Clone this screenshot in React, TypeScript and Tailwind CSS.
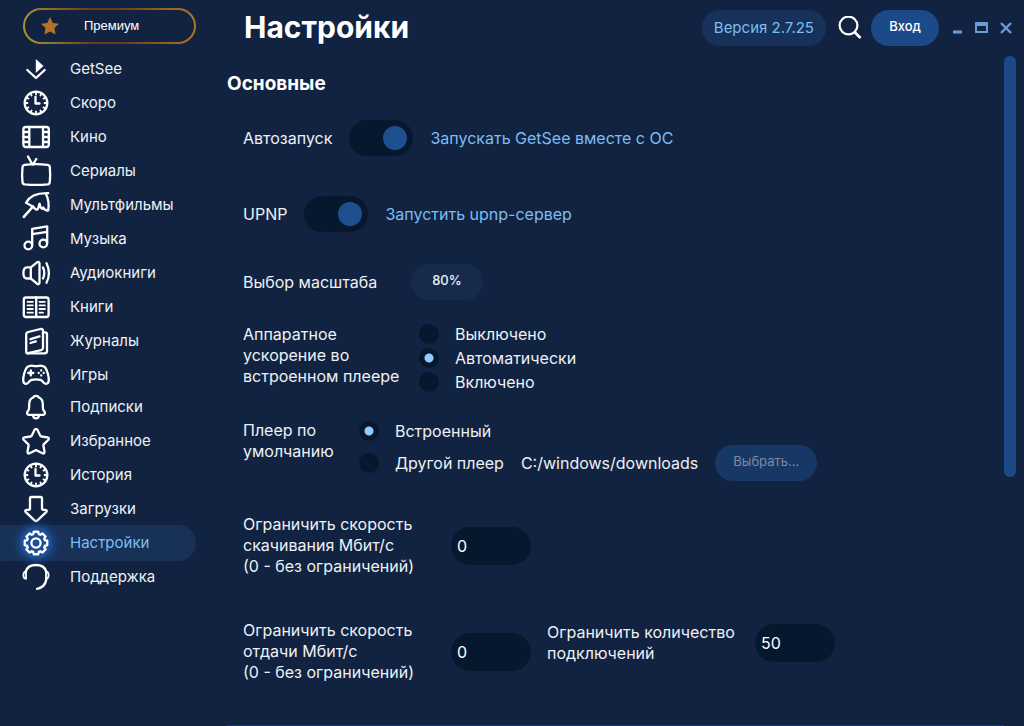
import { ReactNode, useState } from 'react';

const gearPath = (() => {
  const points: string[] = [];
  for (let i = 0; i < 8; i++) {
    const a = (i * Math.PI) / 4 - Math.PI / 2;
    const steps: [number, number][] = [
      [-0.3, 9.3],
      [-0.2, 11.5],
      [0.2, 11.5],
      [0.3, 9.3],
    ];
    steps.forEach(([d, r]) => {
      points.push(`${(16 + r * Math.cos(a + d)).toFixed(2)} ${(16 + r * Math.sin(a + d)).toFixed(2)}`);
    });
  }
  return `M${points.join('L')}Z`;
})();

const icons: Record<string, ReactNode> = {
  getsee: (
    <>
      <path d="M7.3 17l8.700 8 8.700-8" />
      <path d="M15.8 6v14l7.700-7z" fill="currentColor" stroke="none" />
    </>
  ),
  clock: (
    <>
      <circle cx="16" cy="16" r="11.3" />
      <path d="M15.5 10V16.5H19.5" />
      <path
        strokeWidth="1.8"
        d="M16 5v2.500M16 24.500v2.500M5 16h2.500M24.500 16H27M6.500 10.500l2 1.100M23.500 20.400l2 1.100M6.500 21.500l2-1.100M23.500 11.600l2-1.100M10.500 6.500l1.100 2M20.400 23.500l1.100 2M10.500 25.500l1.100-2M20.400 8.500l1.100-2"
      />
    </>
  ),
  film: (
    <>
      <rect x="3.400" y="6" width="25.400" height="20" rx="2.500" />
      <path d="M9.300 6v20M23 6v20M3.400 11h6M3.400 16h6M3.400 21h6M23 11h6M23 16h6M23 21h6" />
    </>
  ),
  tv: (
    <>
      <path d="M4.500 9.800C12 8.800 20 8.800 27.500 9.800c1.400.2 2.200 1 2.300 2.300.5 5 .5 10 0 15-.1 1.300-.9 2-2.300 2.200-7.500.7-15 .7-22.800 0-1.400-.2-2.100-.9-2.200-2.200-.5-5-.5-10 0-15 .1-1.300.8-2.100 2-2.300z" />
      <path d="M8 1.500l4.300 7.800M16.300 4l-3.300 5.300" />
    </>
  ),
  umbrella: (
    <>
      <path d="M3.800 27.800L13 17.500" strokeWidth="2.600" />
      <path d="M6 13.800C9.500 7.200 17 3.800 28.300 4.200M25.800 4.500C28 9 29.300 15.500 28.200 21.500c-1.800.4-3.800-.8-5-3M6 13.800c3 1.700 5.500 2.400 7.600 4.600 1.400 1.200 2.200 2.500 3.400 2.300 1.700-.3 1.200-3 2.600-6 .8 3.500 1.500 5 2.900 5.200" />
    </>
  ),
  music: (
    <>
      <circle cx="8.300" cy="22.500" r="3.800" />
      <circle cx="23.300" cy="20.500" r="3.800" />
      <path d="M12.200 22.300V5.800L27.200 3.300V20.300M12.200 11.200l15-2.400" />
    </>
  ),
  speaker: (
    <>
      <path d="M10.800 10.300H7C4 10.300 3.400 12.500 3.400 16S4 21.500 7 21.500h3.800z" />
      <path d="M10.800 10.300L17 5.300c1.300-.9 2.500-.3 2.500 1.200v19c0 1.500-1.200 2-2.500 1.200l-6.200-5.200M23 10.500c1.600 3.500 1.600 7.500 0 11M26.500 6.200c3 6 3 13.500 0 19.500" />
    </>
  ),
  book: (
    <>
      <rect x="3.800" y="6.500" width="24.800" height="19.500" rx="2.200" />
      <path d="M16.200 6.500v19" />
      <path
        strokeWidth="1.800"
        d="M7.500 10.800h5.400M7.500 14.400h5.400M7.500 18h5.400M7.500 21.700h5.400M19.500 10.800h5.400M19.500 14.400h5.400M19.500 18h5.400M19.500 21.700h3.500"
      />
    </>
  ),
  magazine: (
    <>
      <path d="M6.200 9.500c0-1.300.8-2.200 2-2.500l12.300-3c1.600-.3 2.500.3 2.500 1.800v17c0 1.200-.6 2-1.800 2.300L7 28.300c-.6 0-.8-.3-.8-1z" />
      <path d="M23 7.300h2c1.400 0 2 .8 2 2V26c0 1.500-.8 2.300-2.300 2.300H7.300M10.500 14.200l9-2.800M10.500 18l5.300-1.600" />
    </>
  ),
  gamepad: (
    <>
      <path d="M10.500 6.800c1.800-.6 2.500.4 5.500.4s3.700-1 5.500-.4c1 .4 2.300.2 3.500 1.500 2.200 2.800 4 9.200 3.800 13.200-.1 2.300-1.300 3.300-3 3.300-2.500 0-3-3.300-5.300-4-2.300-.5-6.700-.5-9 0-2.300.7-2.800 4-5.300 4-1.700 0-2.900-1-3-3.300-.2-4 1.600-10.400 3.800-13.200 1.200-1.300 2.500-1.100 3.500-1.500z" />
      <path d="M10.800 11.500v5M8.300 14h5" />
      <path d="M21.200 11.500h.01M21.200 16.500h.01M18.700 14h.01M23.700 14h.01" />
    </>
  ),
  bell: (
    <>
      <path d="M13.300 6.500C13.600 4.200 18.400 4.200 18.700 6.500c3 1 4.100 3.500 4.100 6.500 0 4-.2 6 1.500 7.300.9.700.9 3.500-.8 3.500h-15c-1.700 0-1.700-2.800-.8-3.500 1.700-1.300 1.500-3.300 1.500-7.300 0-3 1.100-5.500 4.100-6.500z" />
      <path d="M13 24.200c.3 4.200 5.700 4.200 6 0" />
    </>
  ),
  star: (
    <path d="M16 3.800c.6 0 1.100.4 1.400 1l2.900 6c.2.400.5.600.9.700l6.400.9c1.300.2 1.600 1.500.8 2.300l-4.700 4.700c-.3.300-.4.700-.3 1.100l1.100 6.300c.2 1.400-.9 2-2 1.500l-5.700-2.900c-.5-.2-1.100-.2-1.600 0l-5.700 2.900c-1.100.5-2.200-.1-2-1.500l1.100-6.300c.1-.4 0-.8-.3-1.100l-4.700-4.700c-.8-.8-.5-2.100.8-2.300l6.400-.9c.4-.1.700-.3.9-.7l2.900-6c.3-.6.8-1 1.400-1z" />
  ),
  download: (
    <path d="M11.500 4h9c1 0 1.500.5 1.500 1.500v10.300c0 .7.3 1 1 1h2c1.700 0 2.200 1.200 1.200 2.300l-8.700 8.300c-1 .9-2 .9-3 0l-8.700-8.300c-1-1.100-.5-2.300 1.200-2.300h2c.7 0 1-.3 1-1V5.500C10 4.500 10.500 4 11.500 4z" />
  ),
  settings: (
    <>
      <path d={gearPath} />
      <circle cx="16" cy="16" r="4.600" />
    </>
  ),
  support: (
    <>
      <path d="M5.800 10.500C7 6 11 4 16 4s9 2 10.200 6.500M26.300 18.500C25.500 23.500 22.500 26.700 17 27.800" />
      <path
        strokeWidth="1.800"
        d="M6 10.500c-1.800.3-2.600 1.800-2.600 3.700s.8 3.400 2.600 3.700zM26 10.500c1.800.3 2.600 1.800 2.600 3.700s-.8 3.400-2.600 3.700z"
      />
    </>
  ),
};

const catalog = [
  { icon: 'getsee', label: 'GetSee' },
  { icon: 'clock', label: 'Скоро' },
  { icon: 'film', label: 'Кино' },
  { icon: 'tv', label: 'Сериалы' },
  { icon: 'umbrella', label: 'Мультфильмы' },
  { icon: 'music', label: 'Музыка' },
  { icon: 'speaker', label: 'Аудиокниги' },
  { icon: 'book', label: 'Книги' },
  { icon: 'magazine', label: 'Журналы' },
  { icon: 'gamepad', label: 'Игры' },
];

const personal = [
  { icon: 'bell', label: 'Подписки' },
  { icon: 'star', label: 'Избранное' },
  { icon: 'clock', label: 'История' },
  { icon: 'download', label: 'Загрузки' },
  { icon: 'settings', label: 'Настройки', active: true },
  { icon: 'support', label: 'Поддержка' },
];

interface NavItem {
  icon: string;
  label: string;
  active?: boolean;
}

function NavList({ items }: { items: NavItem[] }) {
  return (
    <ul>
      {items.map((item) => (
        <li key={item.label} className="flex h-[34px] items-center">
          <a
            href="#"
            className={
              item.active
                ? 'flex h-9 w-full shrink-0 items-center gap-[18px] rounded-r-full bg-[#183156] pl-5 text-[#7cbdf2]'
                : 'flex h-9 w-full shrink-0 items-center gap-[18px] rounded-r-full pl-5 text-[#eef1f5]'
            }
          >
            <svg
              viewBox="0 0 32 32"
              fill="none"
              stroke="currentColor"
              strokeWidth="2.3"
              strokeLinecap="round"
              strokeLinejoin="round"
              className={
                item.active
                  ? 'size-8 rounded-full bg-[#1b4e96] text-white shadow-[0_0_8px_2px_#1b4e96]'
                  : 'size-8 text-white'
              }
            >
              {icons[item.icon]}
            </svg>
            {item.label}
          </a>
        </li>
      ))}
    </ul>
  );
}

function Sidebar() {
  return (
    <aside className="w-[196px] shrink-0 text-[15px]">
      <div className="mt-2 ml-[23px] h-9 rounded-full bg-linear-[80deg,#a89a35,#6b3c18_40%,#6b3c18_55%,#b07a26] p-[2px]">
        <button className="flex h-full w-full items-center rounded-full bg-[#112341] pl-[15px] text-[13px] text-white">
          <svg viewBox="0 0 20 20" className="mr-6 size-5" fill="#b17428">
            <path d="M10 1l2.800 5.900 6.200.8-4.500 4.400 1.100 6.400L10 15.400l-5.600 3.100 1.100-6.400L1 7.700l6.200-.8z" />
          </svg>
          <span className="font-['Liberation_Sans',sans-serif]">Премиум</span>
        </button>
      </div>
      <nav className="mt-2">
        <NavList items={catalog} />
        <div className="-mt-0.5">
          <NavList items={personal} />
        </div>
      </nav>
    </aside>
  );
}

function Header() {
  return (
    <header className="flex h-14 items-center pr-3 pl-12">
      <h1 className="flex-1 pb-0.5 text-[30px] leading-9 font-bold text-white">Настройки</h1>
      <span className="flex h-9 items-center rounded-full bg-[#17315a] px-3 text-[15px] text-[#7cbdf2]">
        Версия 2.7.25
      </span>
      <button aria-label="Поиск" className="ml-3 text-white">
        <svg viewBox="0 0 24 24" className="size-6" fill="none" stroke="currentColor" strokeWidth="2.2">
          <circle cx="10.500" cy="9.500" r="8.900" />
          <path d="M16.500 16l6 6" strokeWidth="2.600" />
        </svg>
      </button>
      <button className="ml-[9px] h-9 w-[68px] rounded-full bg-[#1c4a88] pb-0.5 text-[13px] font-medium text-white">
        Вход
      </button>
      <div className="ml-3 flex items-center gap-3 text-[#6c9bdb]">
        <button aria-label="Свернуть">
          <svg viewBox="0 0 12 12" className="size-3" fill="currentColor">
            <path d="M2 8.500h9v3H2z" />
          </svg>
        </button>
        <button aria-label="Развернуть">
          <svg viewBox="0 0 13 12" className="h-3 w-[13px]" fill="currentColor" fillRule="evenodd">
            <path d="M0 0h13v11H0zM2 4v5h9V4z" />
          </svg>
        </button>
        <button aria-label="Закрыть">
          <svg viewBox="0 0 12 12" className="size-3" fill="none" stroke="currentColor" strokeWidth="2.400">
            <path d="M1 1l10 10M11 1L1 11" />
          </svg>
        </button>
      </div>
    </header>
  );
}

interface ToggleRowProps {
  id: string;
  label: string;
  hint: string;
}

function ToggleRow({ id, label, hint }: ToggleRowProps) {
  return (
    <div className="flex items-center gap-[17px]">
      <label htmlFor={id}>{label}</label>
      <input
        id={id}
        type="checkbox"
        role="switch"
        defaultChecked
        className="flex h-9 w-16 shrink-0 appearance-none items-center rounded-full bg-[#07182e] px-1.5 before:block before:size-6 before:rounded-full before:bg-[#37506f] checked:justify-end checked:before:bg-[#1e4f8f]"
      />
      <label htmlFor={id} className="text-[#7cbdf2]">
        {hint}
      </label>
    </div>
  );
}

interface RadioProps {
  name: string;
  label: string;
  checked: boolean;
  onSelect: () => void;
}

function Radio({ name, label, checked, onSelect }: RadioProps) {
  return (
    <label className="flex items-center gap-4">
      <input
        type="radio"
        name={name}
        checked={checked}
        onChange={onSelect}
        className="size-5 shrink-0 appearance-none rounded-full bg-[#07182e] checked:bg-[radial-gradient(circle,#8ecdff_4px,transparent_5px)]"
      />
      {label}
    </label>
  );
}

interface NumberFieldProps {
  id: string;
  label: string;
  value: string;
}

function NumberField({ id, label, value }: NumberFieldProps) {
  return (
    <div className="flex items-center gap-4">
      <label htmlFor={id} className="w-48 shrink-0 leading-[21px] whitespace-pre-line">
        {label}
      </label>
      <input
        id={id}
        type="text"
        inputMode="numeric"
        defaultValue={value}
        className="h-[38px] w-20 rounded-full bg-[#07182e] px-1.5 text-white outline-none"
      />
    </div>
  );
}

const accelerationModes = ['Выключено', 'Автоматически', 'Включено'];

function Settings() {
  const [acceleration, setAcceleration] = useState('Автоматически');
  const [player, setPlayer] = useState('Встроенный');

  return (
    <section className="flex-1 pt-3.5 pl-[31px] text-[#eef1f5]">
      <h2 className="text-[19px] leading-7 font-bold text-white">Основные</h2>
      <div className="mt-[22px] pl-4">
        <ToggleRow id="autostart" label="Автозапуск" hint="Запускать GetSee вместе с ОС" />
        <div className="mt-10">
          <ToggleRow id="upnp" label="UPNP" hint="Запустить upnp-сервер" />
        </div>

        <div className="mt-8 flex items-center gap-[34px]">
          <label htmlFor="scale">Выбор масштаба</label>
          <button id="scale" className="h-9 rounded-full bg-[#162b4c] px-[21px] pb-0.5 text-[13px] font-medium">
            80%
          </button>
        </div>

        <div role="radiogroup" aria-labelledby="acceleration" className="mt-[22px] flex gap-4">
          <p id="acceleration" className="w-40 shrink-0 pt-0.5 leading-[21px] whitespace-pre">
            {'Аппаратное\nускорение во\nвстроенном плеере'}
          </p>
          <div>
            {accelerationModes.map((mode) => (
              <Radio
                key={mode}
                name="acceleration"
                label={mode}
                checked={acceleration === mode}
                onSelect={() => setAcceleration(mode)}
              />
            ))}
          </div>
        </div>

        <div role="radiogroup" aria-labelledby="player" className="mt-[23px] flex gap-4">
          <p id="player" className="w-[100px] shrink-0 pt-[3px] leading-[21px]">
            Плеер по умолчанию
          </p>
          <div>
            <div className="flex h-7 items-center">
              <Radio
                name="player"
                label="Встроенный"
                checked={player === 'Встроенный'}
                onSelect={() => setPlayer('Встроенный')}
              />
            </div>
            <div className="flex items-center gap-[17px]">
              <Radio
                name="player"
                label="Другой плеер"
                checked={player === 'Другой плеер'}
                onSelect={() => setPlayer('Другой плеер')}
              />
              <span>C:/windows/downloads</span>
              <button
                disabled={player !== 'Другой плеер'}
                className="h-9 rounded-full bg-[#1c4a88] px-[18px] pb-0.5 text-[13px] text-white disabled:bg-[#173865] disabled:text-[#7e8a9f]"
              >
                Выбрать...
              </button>
            </div>
          </div>
        </div>

        <div className="mt-[33px]">
          <NumberField
            id="download"
            label={'Ограничить скорость\nскачивания Мбит/с\n(0 - без ограничений)'}
            value="0"
          />
        </div>
        <div className="mt-[43px] flex items-start gap-4">
          <NumberField
            id="upload"
            label={'Ограничить скорость\nотдачи Мбит/с\n(0 - без ограничений)'}
            value="0"
          />
          <div className="mt-0.5">
            <NumberField id="connections" label={'Ограничить количество\nподключений'} value="50" />
          </div>
        </div>
      </div>
      <hr className="mt-[42px] border-t border-[#17366a]" />
    </section>
  );
}

export default function App() {
  return (
    <div className="flex min-h-screen bg-[#112341] font-['Inter',sans-serif] text-base">
      <Sidebar />
      <main className="flex min-w-0 flex-1 flex-col">
        <Header />
        <div className="flex flex-1 pr-2">
          <Settings />
          <div className="h-[421px] w-3 shrink-0 rounded-full bg-[#1c4a88]" />
        </div>
      </main>
    </div>
  );
}
